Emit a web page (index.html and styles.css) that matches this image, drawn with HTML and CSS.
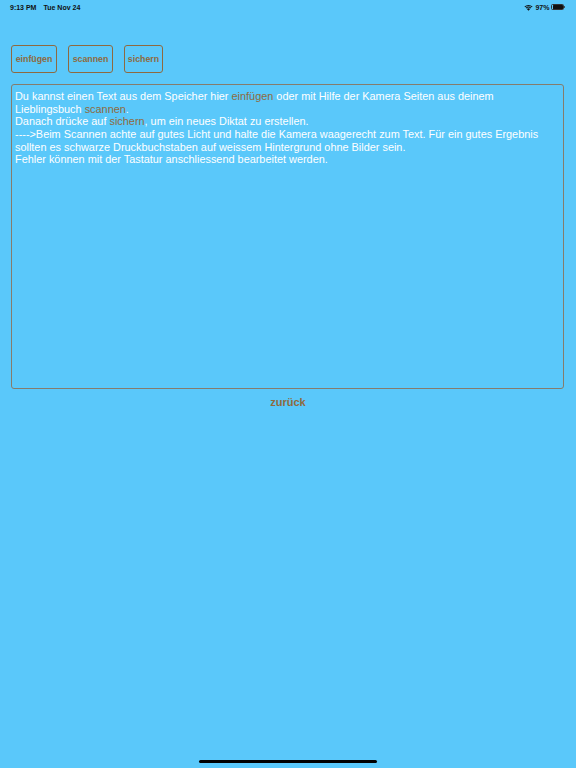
FILE: index.html
```html
<!DOCTYPE html>
<html lang="de">
<head>
<meta charset="utf-8">
<link rel="stylesheet" href="styles.css">
</head>
<body>
<div class="status">
  <div class="status-left"><span>9:13 PM</span><span>Tue Nov 24</span></div>
  <div class="status-right">
    <svg class="wifi" width="9" height="7" viewBox="0 0 18 13"><path d="M9 13 L5.8 9.6 A4.6 4.6 0 0 1 12.2 9.6 Z M3.4 7.1 A8 8 0 0 1 14.6 7.1 L13.2 8.5 A6 6 0 0 0 4.8 8.5 Z M0.9 4.6 A11.6 11.6 0 0 1 17.1 4.6 L15.7 6 A9.6 9.6 0 0 0 2.3 6 Z" fill="#111"/></svg>
    <span>97%</span>
    <span class="battery"><span class="level"></span></span>
  </div>
</div>
<div class="toolbar">
  <button class="btn b1">einfügen</button>
  <button class="btn b2">scannen</button>
  <button class="btn b3">sichern</button>
</div>
<div class="editor"><span>Du kannst einen Text aus dem Speicher hier </span><span class="hl">einfügen</span><span> oder mit Hilfe der Kamera Seiten aus deinem Lieblingsbuch </span><span class="hl">scannen</span><span>.</span><br><span>Danach drücke auf </span><span class="hl">sichern</span><span>, um ein neues Diktat zu erstellen.</span><br><span>----&gt;Beim Scannen achte auf gutes Licht und halte die Kamera waagerecht zum Text. Für ein gutes Ergebnis sollten es schwarze Druckbuchstaben auf weissem Hintergrund ohne Bilder sein.</span><br><span>Fehler können mit der Tastatur anschliessend bearbeitet werden.</span></div>
<div class="back">zurück</div>
<div class="home"></div>
</body>
</html>
```
FILE: styles.css
```css
html, body {
  margin: 0;
  padding: 0;
}
body {
  width: 576px;
  height: 768px;
  background: #5ac8fa;
  font-family: "Liberation Sans", Arial, sans-serif;
  position: relative;
  overflow: hidden;
}
.status {
  height: 14px;
  display: flex;
  justify-content: space-between;
  align-items: center;
  padding: 0 12px 0 10px;
  font-size: 7px;
  font-weight: bold;
  color: #111;
}
.status-left {
  display: flex;
  gap: 7px;
}
.status-right {
  display: flex;
  align-items: center;
  gap: 2px;
}
.battery {
  width: 10px;
  height: 4px;
  border: 0.8px solid #333;
  border-radius: 1.5px;
  padding: 0.3px;
  display: inline-flex;
  position: relative;
}
.battery::after {
  content: "";
  position: absolute;
  right: -2px;
  top: 1.5px;
  width: 1px;
  height: 2px;
  background: #333;
  border-radius: 0 1px 1px 0;
}
.level {
  flex: 1;
  background: #111;
  border-radius: 0.5px;
}
.toolbar {
  display: flex;
  gap: 11px;
  padding: 31px 0 0 11px;
}
.btn {
  height: 28px;
  box-sizing: border-box;
  border: 1.5px solid #8e6a40;
  border-radius: 3px;
  background: transparent;
  color: #8e6a40;
  font-family: "Liberation Sans", Arial, sans-serif;
  font-weight: bold;
  font-size: 8.8px;
  padding: 0;
}
.b1 { width: 46px; }
.b2 { width: 45px; }
.b3 { width: 39px; }
.editor {
  margin: 11px 0 0 11px;
  width: 553px;
  height: 305px;
  box-sizing: border-box;
  border: 1.5px solid #857c6c;
  border-radius: 3px;
  padding: 5px 3px 0 3px;
  color: #fff;
  font-size: 10.9px;
  line-height: 12.65px;
}
.hl {
  color: #8e6a40;
}
.back {
  text-align: center;
  color: #8e6a40;
  font-weight: bold;
  font-size: 11px;
  margin-top: 7px;
}
.home {
  position: absolute;
  left: 199px;
  top: 760px;
  width: 178px;
  height: 3px;
  border-radius: 2px;
  background: #000;
}
```
